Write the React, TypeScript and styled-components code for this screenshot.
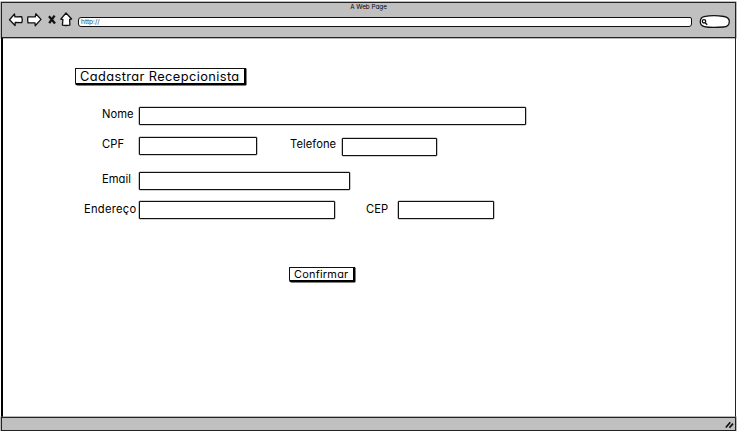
import React from 'react';
import styled, { createGlobalStyle } from 'styled-components';

const GlobalStyle = createGlobalStyle`
  * { box-sizing: border-box; }
  body { margin: 0; background: #fff; overflow: hidden; }
`;

const Browser = styled.div`
  width: 735px;
  height: 429px;
  margin: 2px 1px 0 1px;
  display: flex;
  flex-direction: column;
  color: #000;
  font-family: Inter, "Liberation Sans", sans-serif;
  font-feature-settings: "cv11" 1;
`;

const Header = styled.header`
  flex: none;
  height: 36px;
  border: 1px solid #222;
  background: #c1c0c1;
  box-shadow: 0 0 0 0.5px #777;
  display: flex;
  flex-direction: column;
`;

const PageTitle = styled.div`
  height: 10px;
  line-height: 9px;
  text-align: center;
  font-size: 6.3px;
`;

const Toolbar = styled.div`
  height: 16px;
  display: flex;
  align-items: center;
  padding-left: 6px;
`;

const NavIcons = styled.svg`
  flex: none;
  width: 66px;
  height: 16px;
  margin: 0 4px 2px 0;
`;

const AddressBar = styled.div`
  width: 614px;
  height: 10px;
  margin-top: 2px;
  border: 1.5px solid #111;
  border-radius: 3px 2px 3px 3px;
  background: #fff;
  padding-left: 2px;
  font-size: 6.6px;
  line-height: 9px;
  letter-spacing: 0;
  color: #14465f;
`;

const SearchBox = styled.svg`
  flex: none;
  width: 32px;
  height: 14px;
  margin: 2px 0 0 7px;
`;

const Page = styled.main`
  flex: 1;
  border-left: 2px solid #000;
  border-right: 1px solid #222;
  padding: 30px 0 0 72px;
`;

const Footer = styled.footer`
  flex: none;
  height: 14px;
  border: 1px solid #222;
  background: #c1c0c1;
  box-shadow: 0 0 0 0.5px #777;
  display: flex;
  justify-content: flex-end;
  padding: 3px 1px 0 0;
`;

const SketchButton = styled.button<{ $w: number; $h: number; $size: number; $spacing: number; $left?: number }>`
  display: block;
  width: ${p => p.$w}px;
  height: ${p => p.$h}px;
  margin: 0 0 0 ${p => p.$left ?? 0}px;
  padding: 0 0 0 4px;
  border: 1px solid #111;
  border-right: 2px solid #000;
  border-bottom: 2px solid #000;
  border-radius: 1px 0 1px 2px;
  box-shadow: 0.5px 0.5px 0 #000;
  background: #fff;
  color: #000;
  text-align: left;
  font-family: inherit;
  font-feature-settings: inherit;
  font-size: ${p => p.$size}px;
  line-height: ${p => p.$h - 2}px;
  letter-spacing: ${p => p.$spacing}px;
  white-space: nowrap;
`;

const Row = styled.div<{ $top: number }>`
  display: flex;
  align-items: flex-start;
  height: 18px;
  margin-top: ${p => p.$top}px;
`;

const Label = styled.label<{ $indent: number; $w: number; $drop?: number; $spacing?: number }>`
  flex: none;
  width: ${p => p.$w}px;
  margin-left: ${p => p.$indent}px;
  padding-top: ${p => p.$drop ?? 0}px;
  font-size: 11.2px;
  line-height: 14px;
  letter-spacing: ${p => p.$spacing ?? 0.05}px;
  white-space: nowrap;
`;

const Field = styled.input<{ $w: number; $drop?: number }>`
  flex: none;
  width: ${p => p.$w}px;
  height: 18px;
  margin: ${p => p.$drop ?? 0}px 0 0;
  padding: 0 3px;
  border: 1px solid #111;
  border-radius: 1px;
  box-shadow: 0 0 0 0.3px #444;
  background: #fff;
  outline: none;
  font: inherit;
`;

export default function App() {
  return (
    <>
      <GlobalStyle />
      <Browser>
        <Header>
          <PageTitle>A Web Page</PageTitle>
          <Toolbar>
            <NavIcons viewBox="8 12 66 16" fill="#fff" stroke="#111" strokeWidth="1.3" strokeLinejoin="round">
              <path d="M9.5 19.7 14.5 14l.4 2.9 6.8-.3.6 3.2-.5 2.9-6.6-.2-.1 3z" />
              <path d="M41 19.4 35.8 13.8l-.5 3-7.4.1-.3 2.8.4 3.1 7 .1.2 2.9z" />
              <path d="m49 16.2 6 7.3M54.6 15.6l-5.4 7.6" fill="none" strokeWidth="2.3" />
              <path d="m66 13-5.2 6.2 2.1.3-.5 5.6 3.5.4 4-.4-.3-5.7 2-.4z" />
            </NavIcons>
            <AddressBar>http://</AddressBar>
            <SearchBox viewBox="699 15 32 14" fill="#fff" stroke="#111" strokeWidth="1.3">
              <path d="M704 16.7c5-1.1 15-1 20-.2 4 .7 5.3 2.6 5.3 5 0 2.9-2 5.3-6 5.5-5 .4-15 .5-19-.4-3-.7-4.1-2.8-4-5.1.1-2.5 1.5-4.3 3.7-4.8z" />
              <circle cx="704" cy="21.3" r="1.7" />
              <path d="m705.2 22.7 2 2" />
            </SearchBox>
          </Toolbar>
        </Header>
        <Page>
          <SketchButton $w={171} $h={17} $size={12.8} $spacing={0.41}>Cadastrar Recepcionista</SketchButton>
          <Row $top={22}>
            <Label $indent={27} $w={37}>Nome</Label>
            <Field $w={387} aria-label="Nome" />
          </Row>
          <Row $top={12}>
            <Label $indent={27} $w={37}>CPF</Label>
            <Field $w={118} aria-label="CPF" />
            <Label $indent={33} $w={52}>Telefone</Label>
            <Field $w={95} $drop={1} aria-label="Telefone" />
          </Row>
          <Row $top={17}>
            <Label $indent={27} $w={37}>Email</Label>
            <Field $w={211} aria-label="Email" />
          </Row>
          <Row $top={11}>
            <Label $indent={9} $w={55} $drop={1} $spacing={0.25}>Endereço</Label>
            <Field $w={196} aria-label="Endereço" />
            <Label $indent={31} $w={32} $drop={1}>CEP</Label>
            <Field $w={96} aria-label="CEP" />
          </Row>
          <Row $top={48}>
            <SketchButton $w={66} $h={15} $size={10.9} $spacing={0.25} $left={214}>Confirmar</SketchButton>
          </Row>
        </Page>
        <Footer>
          <svg width="9" height="8" viewBox="0 0 9 8" stroke="#111" strokeWidth="1.7">
            <path d="M.8 6.5 5.3 1.2M4.4 6.8 8 2.6" />
          </svg>
        </Footer>
      </Browser>
    </>
  );
}
